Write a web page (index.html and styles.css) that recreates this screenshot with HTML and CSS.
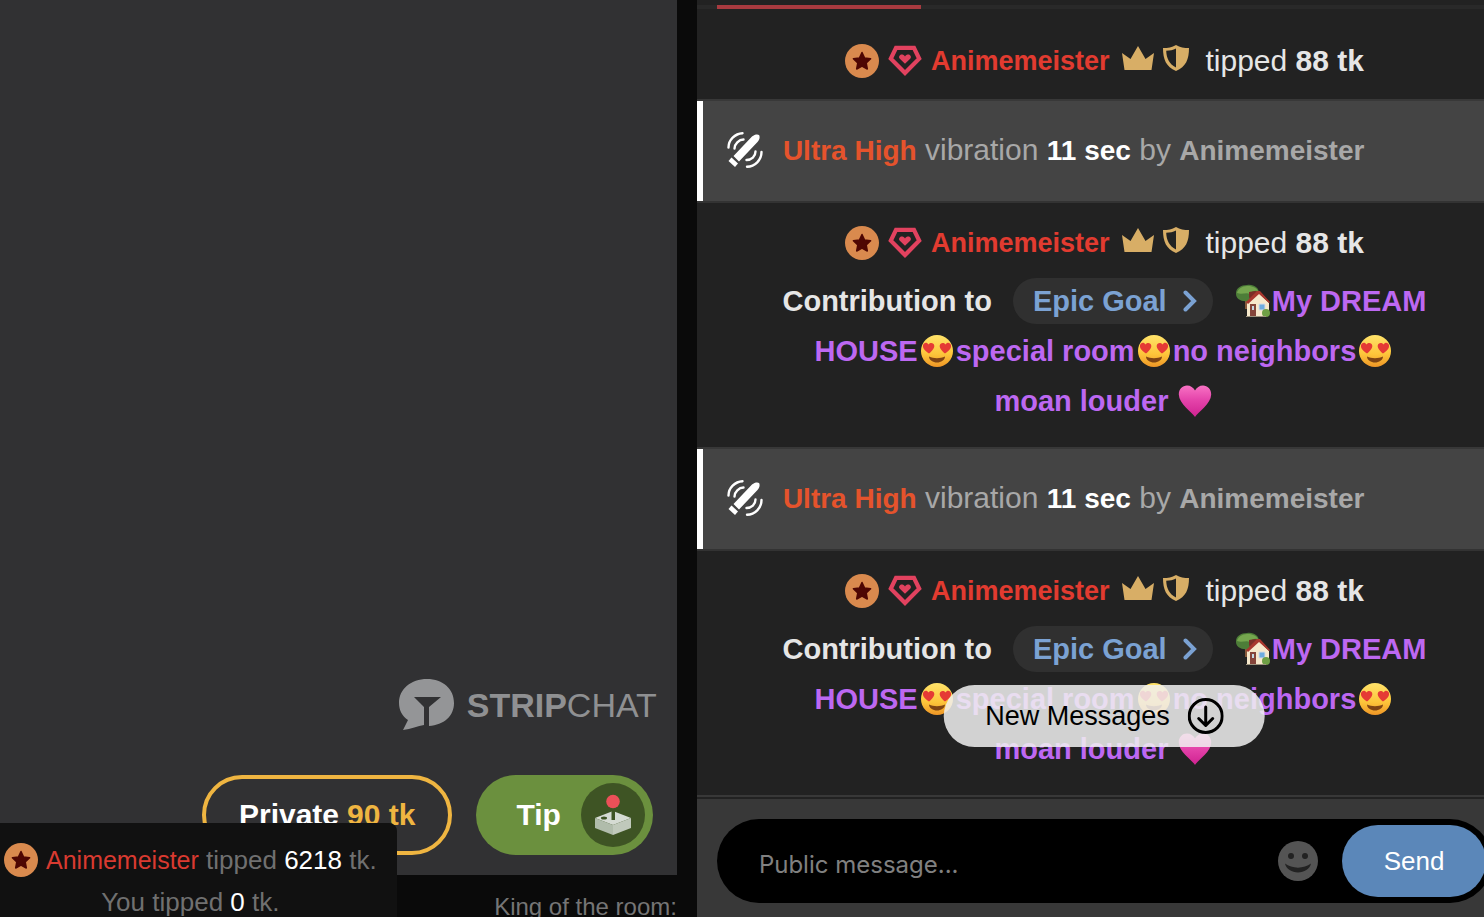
FILE: index.html
```html
<!DOCTYPE html>
<html lang="en">
<head>
  <meta charset="UTF-8">
  <meta name="viewport" content="width=device-width, initial-scale=1.0">
  <title>Stripchat</title>
  <link rel="stylesheet" href="styles.css">
</head>
<body>
  <!-- Shared icons -->
  <svg class="sprite" aria-hidden="true">
    <defs>
      <linearGradient id="face" x1="0" y1="0" x2="0" y2="1">
        <stop offset="0" stop-color="#ffe36a"/>
        <stop offset="0.6" stop-color="#fdc53a"/>
        <stop offset="1" stop-color="#ee9526"/>
      </linearGradient>
      <linearGradient id="pink" x1="0" y1="0" x2="0" y2="1">
        <stop offset="0" stop-color="#f872c4"/>
        <stop offset="0.45" stop-color="#e545ab"/>
        <stop offset="1" stop-color="#cf2290"/>
      </linearGradient>
    </defs>
    <symbol id="star" viewBox="0 0 34 34">
      <circle cx="17" cy="17" r="17" fill="#d98a4e"/>
      <path d="M17 8.5l2.6 5.5 6 .8-4.400 4.200 1.100 6-5.300-2.900-5.300 2.900 1.100-6-4.400-4.200 6-.8z" fill="#4e0703" stroke="#4e0703" stroke-width="1.500" stroke-linejoin="round"/>
    </symbol>
    <symbol id="gem" viewBox="0 0 36 33">
      <path d="M8.500 2.500h19l5.500 11.500L18 29.300 3 14z" fill="none" stroke="#e2425f" stroke-width="4.500"/>
      <path d="M18 19.500l-5.500-5.300c-2-2.200.2-5.200 2.700-4.500 1.300.3 2.200 1.200 2.800 2.100.6-.9 1.500-1.800 2.800-2.100 2.500-.7 4.700 2.300 2.700 4.500z" fill="#e2425f"/>
    </symbol>
    <symbol id="crown" viewBox="0 0 32 24">
      <path d="M2.500 24L0 7l8.500 6L16 0l7.500 13L32 7l-2.500 17z" fill="#d8ae66"/>
    </symbol>
    <symbol id="shield" viewBox="0 0 26 26">
      <path d="M13 0c4 2.500 8 3 13 3 0 11-3 19-13 23C3 22 0 14 0 3c5 0 9-.5 13-3z" fill="#d8ae66"/>
      <path d="M13 3.500v19C6 19 3.500 13 3.200 5.800 7 5.600 10 5 13 3.500z" fill="#222"/>
    </symbol>
    <symbol id="toy" viewBox="0 0 36 36">
      <g fill="#fff">
        <path d="M6.500 24L25 4.500c2.500-2.300 6-2.500 7-1.500s1 4.500-1.500 7L12 29.500z"/>
        <path d="M4.500 25.500l6.500 6L8 35l-6.500-6z"/>
      </g>
      <g fill="none" stroke="#fff" stroke-width="2.400" stroke-linecap="round">
        <path d="M1.500 15.500C1.500 8 8 1.500 15.500 1.200M7.500 16.500C7.500 12 12 7.500 16.500 7.500"/>
        <path d="M34.500 20c0 8-6.500 14.500-14.500 14.800M28.500 19.500c0 5-4 8.500-9 8.500"/>
      </g>
    </symbol>
    <symbol id="house" viewBox="0 0 34 34">
      <path d="M9 13h4v12H9z" fill="#87593b"/>
      <path d="M0 10C-.5 5 4 1 11 1c7-1 12 3 12 8l-8 7C8 19 0 16 0 10z" fill="#4d7d38"/>
      <path d="M1 9c1-4 5-7 10-7 5-.5 10 2 11 5-4-1-6 0-8 3-4-2-8 1-13-1z" fill="#75a64e"/>
      <path d="M13 13V8l6-1 4 1v3l-7 9z" fill="#7b2e27"/>
      <path d="M11 18L23 9l10 10v13H11z" fill="#f6e8cb"/>
      <path d="M10 18L21 7h3l10 11-1 1-10-9-11 10z" fill="#a8372e"/>
      <path d="M14 20h6v12h-6z" fill="#85453a"/>
      <path d="M16 22h2v4h-2z" fill="#c3d7e0"/>
      <path d="M23 20h6v6h-6z" fill="#6dace0" stroke="#d8dbe0"/>
      <circle cx="30" cy="29" r="4" fill="#6f9f45"/>
      <path d="M10 32h20v1H10z" fill="#9c927d"/>
    </symbol>
    <symbol id="love" viewBox="0 0 34 34">
      <circle cx="17" cy="17" r="16" fill="url(#face)"/>
      <path d="M9 22.500c4.500 2.300 11.500 2.300 16 0 0 3.500-4 6-8 6s-8-2.500-8-6z" fill="#7f4413"/>
      <path d="M9 19.500c-4-2.500-6.500-5.300-6-8.200.5-2.800 4-3.500 5.500-.8 2-2.500 5.500-1.500 5.800 1.200.2 2.800-2.600 5.600-5.300 7.800z" fill="#e53a35"/>
      <path d="M25 19.500c4-2.500 6.500-5.300 6-8.200-.5-2.800-4-3.500-5.500-.8-2-2.500-5.500-1.500-5.800 1.200-.2 2.800 2.600 5.600 5.300 7.800z" fill="#e53a35"/>
    </symbol>
    <symbol id="heart" viewBox="0 0 34 34">
      <path d="M17 33C14 28 1 20 .8 10.500.7 5 4.500 1.500 9 1.500c3.500 0 6.500 2 8 5 1.500-3 4.500-5 8-5 4.500 0 8.300 3.500 8.200 9C33 20 20 28 17 33z" fill="url(#pink)"/>
    </symbol>
  </svg>

  <main class="room">
    <section class="stage">
      <div class="player">
        <div class="watermark">
          <svg class="watermark-icon" viewBox="0 0 56 52">
            <path d="M28 0c16 0 27 10 27 24 0 13-10 22-25 23V28l12-10H15l10 10v18c-6 1-13 4-21 5l5-10C3 37 0 31 0 24 0 10 12 0 28 0z"/>
          </svg>
          <span class="brand"><b>STRIP</b>CHAT</span>
        </div>
        <div class="actions">
          <button class="private-button" type="button">Private <span class="price">90 tk</span></button>
          <button class="tip-button" type="button">
            Tip
            <span class="joystick">
              <svg viewBox="0 0 64 64">
                <path d="M14 35l18-7 18 7-18 7z" fill="#d5dbd3"/>
                <path d="M14 35l18 7v10l-18-7z" fill="#b0bcab"/>
                <path d="M50 35l-18 7v10l18-7z" fill="#c0c9bb"/>
                <ellipse cx="23" cy="35" rx="3" ry="1.500" fill="#3e5424"/>
                <path d="M30.500 26h3.500v11h-3.500z" fill="#3e5424"/>
                <circle cx="32" cy="18.500" r="6.800" fill="#ec5058"/>
              </svg>
            </span>
          </button>
        </div>
      </div>
      <footer class="king">King of the room:</footer>
      <aside class="tip-summary">
        <p class="top-tipper">
          <svg class="star"><use href="#star"/></svg>
          <span><a class="tipper" href="#">Animemeister</a> tipped <span class="amount">6218</span> tk.</span>
        </p>
        <p class="own-tips">You tipped <span class="amount">0</span> tk.</p>
      </aside>
    </section>

    <section class="chat">
      <nav class="tabs"><span class="tab-active"></span></nav>
      <div class="messages">
        <article class="message first">
          <div class="tip">
            <svg class="star"><use href="#star"/></svg>
            <svg class="gem"><use href="#gem"/></svg>
            <a class="user" href="#">Animemeister</a>
            <svg class="crown"><use href="#crown"/></svg>
            <svg class="shield"><use href="#shield"/></svg>
            <span class="tip-text">tipped <b>88 tk</b></span>
          </div>
        </article>
        <article class="message vibration">
          <svg class="toy"><use href="#toy"/></svg>
          <p><b class="level">Ultra High</b> vibration <b class="time">11 sec</b> by <b>Animemeister</b></p>
        </article>
        <article class="message">
          <div class="tip">
            <svg class="star"><use href="#star"/></svg>
            <svg class="gem"><use href="#gem"/></svg>
            <a class="user" href="#">Animemeister</a>
            <svg class="crown"><use href="#crown"/></svg>
            <svg class="shield"><use href="#shield"/></svg>
            <span class="tip-text">tipped <b>88 tk</b></span>
          </div>
          <p class="goal">Contribution to
            <button class="goal-button" type="button">Epic Goal <svg class="chevron" viewBox="0 0 14 22"><path d="M2.500 2.500L11 11l-8.500 8.500"/></svg></button>
            <span class="goal-name"><svg class="emoji"><use href="#house"/></svg>My DREAM<br>HOUSE<svg class="emoji"><use href="#love"/></svg>special room<svg class="emoji"><use href="#love"/></svg>no neighbors<svg class="emoji"><use href="#love"/></svg><br>moan louder <svg class="emoji"><use href="#heart"/></svg></span>
          </p>
        </article>
        <article class="message vibration">
          <svg class="toy"><use href="#toy"/></svg>
          <p><b class="level">Ultra High</b> vibration <b class="time">11 sec</b> by <b>Animemeister</b></p>
        </article>
        <article class="message">
          <div class="tip">
            <svg class="star"><use href="#star"/></svg>
            <svg class="gem"><use href="#gem"/></svg>
            <a class="user" href="#">Animemeister</a>
            <svg class="crown"><use href="#crown"/></svg>
            <svg class="shield"><use href="#shield"/></svg>
            <span class="tip-text">tipped <b>88 tk</b></span>
          </div>
          <p class="goal">Contribution to
            <button class="goal-button" type="button">Epic Goal <svg class="chevron" viewBox="0 0 14 22"><path d="M2.500 2.500L11 11l-8.500 8.500"/></svg></button>
            <span class="goal-name"><svg class="emoji"><use href="#house"/></svg>My DREAM<br>HOUSE<svg class="emoji"><use href="#love"/></svg>special room<svg class="emoji"><use href="#love"/></svg>no neighbors<svg class="emoji"><use href="#love"/></svg><br>moan louder <svg class="emoji"><use href="#heart"/></svg></span>
          </p>
        </article>
        <button class="new-messages" type="button">
          New Messages
          <svg class="down" viewBox="0 0 36 36"><circle cx="18" cy="18" r="16.500"/><path d="M18 9v18M11 20.500l7 7 7-7"/></svg>
        </button>
      </div>
      <form class="composer">
        <div class="field">
          <input class="message-input" type="text" placeholder="Public message..." aria-label="Public message">
          <button class="smile-button" type="button" aria-label="Smileys">
            <svg viewBox="0 0 40 40">
              <circle cx="20" cy="20" r="20" fill="#545454"/>
              <circle cx="13" cy="15" r="3" fill="#222"/>
              <circle cx="27" cy="15" r="3" fill="#222"/>
              <path d="M7 22.500c7 5.500 19 5.500 26 0-1 5.500-7 9-13 9s-12-3.500-13-9z" fill="#222"/>
            </svg>
          </button>
          <button class="send-button" type="button">Send</button>
        </div>
      </form>
    </section>
  </main>
</body>
</html>
```
FILE: styles.css
```css
* {
  box-sizing: border-box;
}
body {
  margin: 0;
  background-color: #0a0a0a;
  color: #e6e6e6;
  font-family: "Liberation Sans", Arial, sans-serif;
  overflow: hidden;
}
p {
  margin: 0;
}
a {
  text-decoration: none;
}
button,
input {
  font-family: inherit;
  border: none;
}
button {
  cursor: pointer;
}
svg {
  flex-shrink: 0;
}
.sprite {
  position: absolute;
  width: 0;
  height: 0;
}
.room {
  display: grid;
  grid-template-columns: minmax(0, 43fr) minmax(0, 50fr);
  grid-template-rows: minmax(0, 1fr);
  column-gap: 20px;
  height: 100vh;
}

/* Video side */
.stage {
  position: relative;
  display: flex;
  flex-direction: column;
}
.player {
  flex: 1;
  display: flex;
  flex-direction: column;
  justify-content: flex-end;
  align-items: flex-end;
  gap: 44px;
  padding: 20px 24px;
  background-color: #313133;
}
.watermark {
  display: flex;
  align-items: center;
  gap: 12px;
  margin-right: -4px;
  color: #8f9092;
  font-size: 34px;
}
.watermark-icon {
  width: 56px;
  height: 52px;
  fill: #949597;
}
.actions {
  display: flex;
  gap: 24px;
}
.private-button,
.tip-button {
  display: flex;
  align-items: center;
  height: 80px;
  border-radius: 40px;
  color: #fff;
  font-size: 30px;
  font-weight: bold;
}
.private-button {
  gap: 8px;
  padding: 0 33px;
  border: 4px solid #efb541;
  background: none;
}
.price {
  color: #efb541;
}
.tip-button {
  gap: 20px;
  padding: 0 8px 0 40px;
  background-color: #6b903e;
}
.joystick {
  width: 64px;
  height: 64px;
  border-radius: 50%;
  background-color: #3e5424;
}
.king {
  height: 42px;
  padding-top: 17px;
  color: #757575;
  font-size: 24px;
  line-height: 30px;
  text-align: right;
}
.tip-summary {
  position: absolute;
  left: 0;
  bottom: 0;
  height: 94px;
  padding: 16px 20px 0 4px;
  border-top-right-radius: 8px;
  background-color: #111;
  color: #707070;
  font-size: 26px;
  line-height: 42px;
}
.top-tipper {
  display: flex;
  align-items: center;
  gap: 8px;
}
.own-tips {
  text-align: center;
}
.tipper {
  color: #d93a30;
  font-size: 25px;
}
.amount {
  color: #fff;
}
.star {
  width: 34px;
  height: 34px;
}

/* Chat side */
.chat {
  display: flex;
  flex-direction: column;
  margin-right: -28px; /* the chat runs on past the window edge */
  background-color: #222;
}
.tabs {
  margin-top: 5px;
  padding: 0 20px;
  background-color: #292929;
}
.tab-active {
  display: block;
  width: 204px;
  height: 4px;
  background-color: #a83a3f;
}
.messages {
  position: relative;
  flex: 1;
  min-height: 0;
}
.message {
  padding: 15px 40px 21px;
  border-bottom: 2px solid #383838;
  font-size: 29px;
  line-height: 50px;
  text-align: center;
}
.first {
  padding: 27px 40px 13px;
}
.tip {
  display: flex;
  justify-content: center;
  align-items: center;
  gap: 9px;
}
.tip-text {
  font-size: 30px;
}
.gem {
  width: 34px;
  height: 32px;
}
.user {
  color: #e23b30;
  font-size: 27px;
  font-weight: bold;
}
.crown {
  width: 32px;
  height: 24px;
  margin: 0 0 6px 3px;
}
.shield {
  width: 26px;
  height: 26px;
  margin: 0 8px 6px 0;
}
.vibration {
  display: flex;
  align-items: center;
  gap: 20px;
  padding: 24px 30px 26px;
  border-bottom-color: #333;
  background-color: #444;
  background-clip: padding-box;
  box-shadow: inset 6px 0 #fff;
  color: #a8a8a8;
  font-size: 30px;
}
.vibration b {
  font-size: 28px;
  line-height: 1;
}
.toy {
  width: 36px;
  height: 36px;
}
.vibration .level {
  color: #e5532c;
}
.vibration .time {
  color: #fff;
}
.goal {
  margin-top: 8px;
  font-weight: bold;
}
.goal-button {
  display: inline-flex;
  align-items: center;
  gap: 16px;
  height: 46px;
  margin: 0 13px;
  padding: 0 16px 0 20px;
  border-radius: 23px;
  background-color: #303030;
  color: #7ba2d3;
  font-size: 29px;
  font-weight: bold;
  line-height: 46px;
  vertical-align: baseline;
}
.chevron {
  width: 14px;
  height: 22px;
  fill: none;
  stroke: #7ba2d3;
  stroke-width: 4px;
  stroke-linecap: round;
}
.goal-name {
  color: #bd68f2;
}
.emoji {
  width: 34px;
  height: 34px;
  margin: 0 2px;
  vertical-align: -7px;
}
.new-messages {
  position: absolute;
  bottom: 50px;
  left: 50%;
  display: flex;
  align-items: center;
  gap: 18px;
  height: 62px;
  padding: 0 41px;
  border-radius: 31px;
  background-color: rgba(240, 240, 240, 0.86);
  color: #000;
  font-size: 27px;
  transform: translateX(-50%);
}
.down {
  width: 36px;
  height: 36px;
  fill: none;
  stroke: #000;
  stroke-width: 3px;
  stroke-linecap: round;
  stroke-linejoin: round;
}
.composer {
  padding: 20px 20px 14px;
  border-top: 2px solid #222;
  background-color: #383838;
}
.field {
  display: flex;
  align-items: center;
  height: 84px;
  padding: 0 6px 0 42px;
  border-radius: 42px;
  background-color: #000;
}
.message-input {
  flex: 1;
  min-width: 0;
  height: 60px;
  padding: 6px 0 0;
  outline: none;
  background: none;
  color: #fff;
  font-family: Inter, sans-serif;
  font-size: 24px;
}
.message-input::placeholder {
  color: #808080;
}
.smile-button {
  width: 40px;
  height: 40px;
  margin-right: 24px;
  padding: 0;
  background: none;
}
.send-button {
  width: 144px;
  height: 72px;
  border-radius: 36px;
  background-color: #5b87b9;
  color: #fff;
  font-size: 26px;
}
```
